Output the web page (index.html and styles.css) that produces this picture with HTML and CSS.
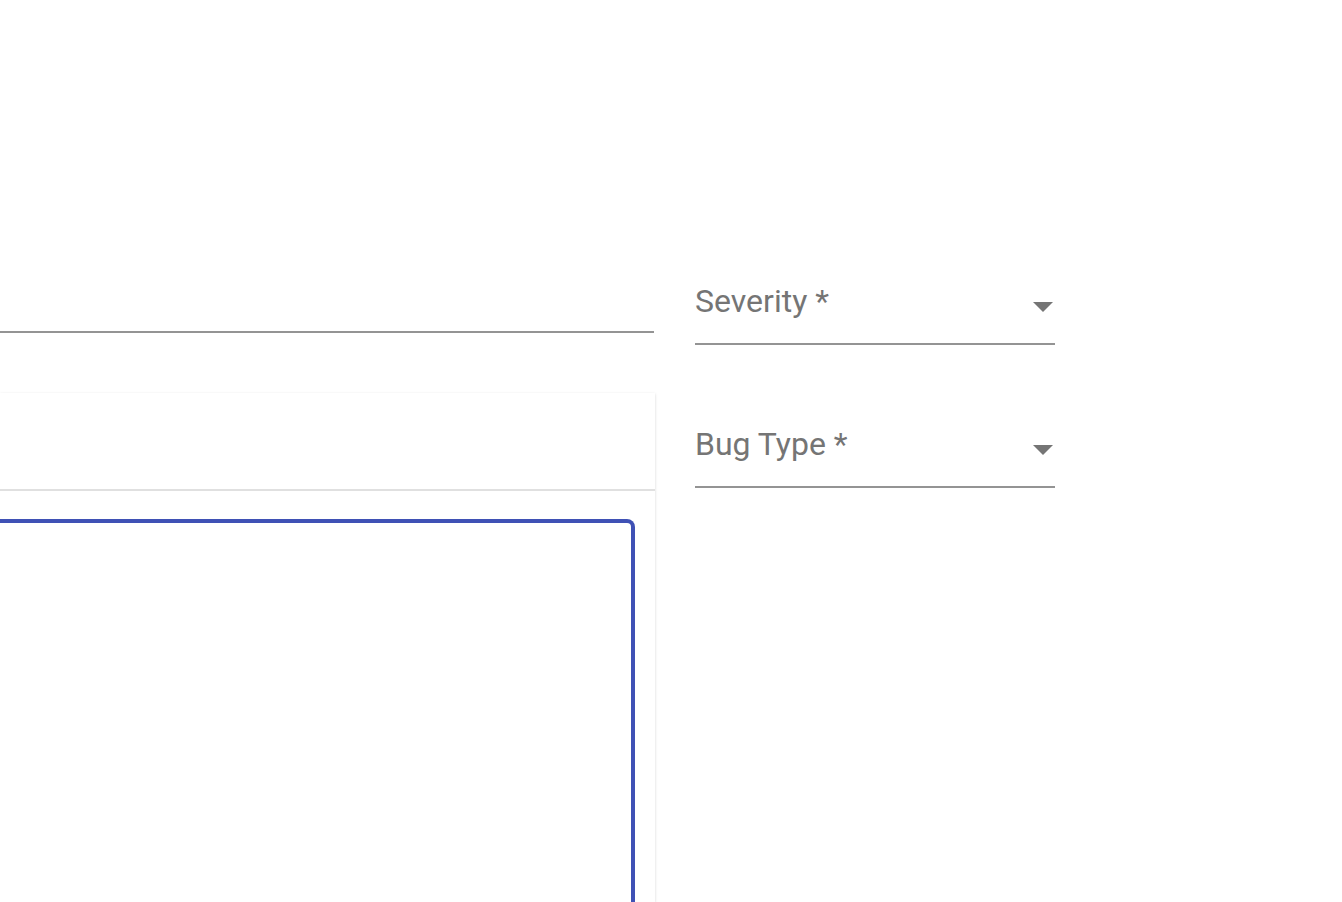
FILE: index.html
```html
<!DOCTYPE html>
<html lang="en">
<head>
<meta charset="utf-8">
<title>Bug report</title>
<link rel="stylesheet" href="styles.css">
</head>
<body>
<div class="page">
  <div class="main-col">
    <div class="title-field"></div>
    <div class="card">
      <div class="card-header"></div>
      <div class="card-body">
        <div class="editor"></div>
      </div>
    </div>
  </div>
  <div class="side-col">
    <div class="select-field">
      <span class="select-label">Severity *</span>
      <span class="select-arrow"></span>
    </div>
    <div class="select-field">
      <span class="select-label">Bug Type *</span>
      <span class="select-arrow"></span>
    </div>
  </div>
</div>
</body>
</html>
```

FILE: styles.css
```css
html, body {
  margin: 0;
  padding: 0;
  background: #ffffff;
  overflow: hidden;
  height: 902px;
}

.page {
  display: flex;
  align-items: flex-start;
  gap: 40px;
  font-family: Roboto, "Liberation Sans", sans-serif;
}

.main-col {
  width: 655px;
  display: flex;
  flex-direction: column;
}

.title-field {
  height: 331px;
  border-bottom: 2px solid #949494;
  width: 654px;
}

.card {
  margin-top: 60px;
  height: 509px;
  background: #ffffff;
  box-shadow: 0 1px 3px rgba(0, 0, 0, 0.14), 0 1px 1px rgba(0, 0, 0, 0.06);
  overflow: hidden;
  display: flex;
  flex-direction: column;
}

.card-header {
  height: 96px;
  border-bottom: 2px solid #e0e0e0;
  flex-shrink: 0;
}

.card-body {
  padding: 28px 20px 0 0;
}

.editor {
  height: 440px;
  border: 4px solid #3f51b5;
  border-left-width: 0;
  border-radius: 0 8px 0 0;
}

.side-col {
  width: 360px;
  padding-top: 282px;
  display: flex;
  flex-direction: column;
  gap: 80px;
}

.select-field {
  height: 61px;
  border-bottom: 2px solid #949494;
  display: flex;
  justify-content: space-between;
  align-items: flex-start;
}

.select-label {
  font-size: 32px;
  line-height: 38px;
  color: #757575;
}

.select-arrow {
  margin-top: 20px;
  margin-right: 2px;
  width: 0;
  height: 0;
  border-left: 10px solid transparent;
  border-right: 10px solid transparent;
  border-top: 10px solid #757575;
}
```
